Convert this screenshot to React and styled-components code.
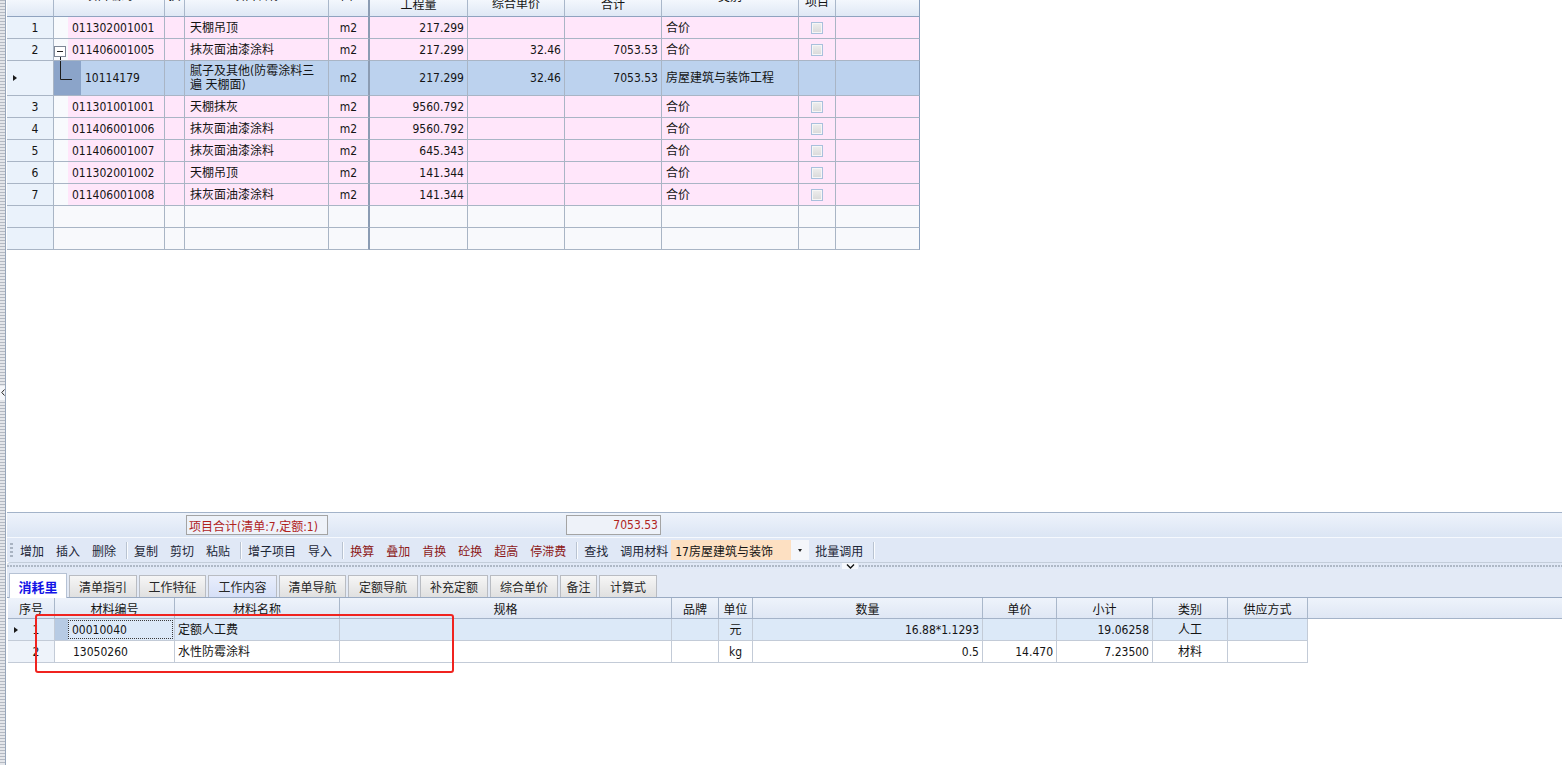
import React from 'react';
import styled, { createGlobalStyle } from 'styled-components';

const GlobalStyle = createGlobalStyle`
  html, body { margin: 0; padding: 0; background: #fff; }
  body {
    font-family: "DejaVu Sans Condensed", "DejaVu Sans", "Noto Sans CJK SC", sans-serif;
    font-size: 12px;
    color: #141414;
  }
`;

const TOP_COLS = '47px 111px 20px 144px 41px 98px 97px 97px 137px 37px 84px';
const BOT_COLS = '47px 120px 165px 332px 47px 34px 230px 74px 96px 75px 80px';

const Page = styled.div`
  position: relative;
  display: flex;
  width: 1562px;
  height: 765px;
  overflow: hidden;
`;

const SideGrip = styled.div`
  width: 6px;
  flex: none;
  box-sizing: border-box;
  border-right: 1px solid #97a6bb;
  background: repeating-linear-gradient(to bottom, #b4b9c2 0 1px, #e4e6ea 1px 3px);
  display: flex;
  align-items: center;
  padding-top: 20px;
`;

const GripArrow = styled.div`
  width: 5px;
  height: 14px;
  background: #f4f6fa;
  display: flex;
  align-items: center;
  justify-content: center;
`;

const Main = styled.div`
  flex: 1;
  display: flex;
  flex-direction: column;
  min-width: 0;
  padding-left: 1px;
`;

/* ---------- top grid ---------- */

const TopPane = styled.div`
  height: 512px;
  flex: none;
  background: #fff;
  overflow: hidden;
`;

const TopGrid = styled.div`
  width: 913px;
`;

const GridRow = styled.div`
  display: grid;
  grid-template-columns: ${p => p.$cols};
  width: max-content;
  height: ${p => p.$h || 22}px;
  background: ${p => p.$bg || 'transparent'};
`;

const HeadCell = styled.div`
  box-sizing: border-box;
  height: 17px;
  overflow: hidden;
  display: flex;
  align-items: flex-end;
  justify-content: center;
  padding-bottom: ${p => p.$lift}px;
  line-height: 14px;
  background: linear-gradient(#f3f7fd, #dfe8f5);
  border-right: ${p => (p.$thick ? '2px solid #8b9cb3' : p.$last ? '1px solid #8aa0bd' : '1px solid #a9b7ca')};
  border-bottom: 1px solid #8fa3bf;
  white-space: nowrap;
`;

const Cell = styled.div`
  box-sizing: border-box;
  display: flex;
  align-items: center;
  justify-content: ${p => (p.$align === 'right' ? 'flex-end' : p.$align === 'center' ? 'center' : 'flex-start')};
  padding: 0 ${p => (p.$pad ?? 4)}px;
  border-right: ${p => (p.$thick ? '2px solid #8b9cb3' : p.$last ? '1px solid #8aa0bd' : '1px solid #a9b5c5')};
  border-bottom: 1px solid #a9b5c5;
  background: ${p => p.$bg || 'transparent'};
  white-space: nowrap;
  overflow: hidden;
  line-height: 14px;
`;

const NumCell = styled(Cell)`
  padding: 0;
  background: ${p => p.$bg || '#eaf2fb'};
`;

const Marker = styled.span`
  width: 4px;
  margin-left: 6px;
  flex: none;
  height: 7px;
  display: flex;
  align-items: center;
  &::before {
    content: '';
    display: ${p => (p.$on ? 'block' : 'none')};
    border-left: 4px solid #1a1a1a;
    border-top: 3.5px solid transparent;
    border-bottom: 3.5px solid transparent;
  }
`;

const Num = styled.span`
  flex: 1;
  text-align: center;
`;

const CodeCell = styled(Cell)`
  padding: 0;
`;

const Indent = styled.div`
  width: ${p => p.$w}px;
  align-self: stretch;
  flex: none;
  background: ${p => p.$bg};
`;

const CodeText = styled.span`
  padding-left: 4px;
`;

const Check = styled.span`
  width: 12px;
  height: 12px;
  box-sizing: border-box;
  border: 1px solid #a9c0dc;
  background: linear-gradient(#eeeeee, #d9d9d9);
  box-shadow: inset 0 0 0 1px #f6f6f6;
`;

/* ---------- summary + toolbar ---------- */

const SumBar = styled.div`
  height: 25px;
  flex: none;
  box-sizing: border-box;
  border-top: 1px solid #a3b3c9;
  background: linear-gradient(#eef3fb, #dbe5f4);
  display: grid;
  grid-template-columns: ${TOP_COLS};
  align-items: center;
`;

const SumBox = styled.div`
  grid-column: ${p => p.$col};
  height: 20px;
  box-sizing: border-box;
  margin: 0 1px;
  border: 1px solid #a4a4a4;
  background: #eef2f9;
  color: #b0231d;
  display: flex;
  align-items: center;
  justify-content: ${p => (p.$right ? 'flex-end' : 'flex-start')};
  padding: 0 2px;
  white-space: nowrap;
`;

const ToolBar = styled.div`
  height: 25px;
  flex: none;
  box-sizing: border-box;
  border-top: 1px solid #f6f9fe;
  background: #e0e8f6;
  display: flex;
  align-items: center;
`;

const Grip = styled.span`
  width: 3px;
  height: 14px;
  margin: 0 1px 0 3px;
  background: repeating-linear-gradient(to bottom, #a9b3c2 0 2px, transparent 2px 4px);
`;

const Tool = styled.span`
  padding: 0 6px;
  color: ${p => (p.$red ? '#8c1818' : '#1c2636')};
  white-space: nowrap;
`;

const Sep = styled.span`
  width: 1px;
  height: 17px;
  margin: 0 1px 0 4px;
  background: #b9c3d1;
  box-shadow: 1px 0 0 #fafcff;
`;

const Combo = styled.div`
  width: 138px;
  height: 20px;
  display: flex;
  align-items: stretch;
  margin-left: -3px;
`;

const ComboText = styled.div`
  flex: 1;
  background: #fde0c2;
  display: flex;
  align-items: center;
  padding-left: 4px;
  white-space: nowrap;
`;

const ComboBtn = styled.div`
  width: 18px;
  background: #f4f6fa;
  display: flex;
  align-items: center;
  justify-content: center;
  &::before {
    content: '';
    border-top: 3px solid #222;
    border-left: 2.5px solid transparent;
    border-right: 2.5px solid transparent;
  }
`;

const PaneSplit = styled.div`
  height: 7px;
  flex: none;
  background: #e0e8f6;
  display: flex;
  align-items: center;
  border-top: 1px solid #c3cdda;
  border-top-left-radius: 4px;
  box-sizing: border-box;
`;

const Dots = styled.div`
  height: 2px;
  flex: ${p => (p.$w ? 'none' : 1)};
  width: ${p => (p.$w ? `${p.$w}px` : 'auto')};
  background: repeating-linear-gradient(to right, #aeb8c6 0 2px, transparent 2px 3px);
`;

const Handle = styled.div`
  width: 16px;
  height: 7px;
  background: #f7f9fd;
  display: flex;
  align-items: center;
  justify-content: center;
  margin: 0 1px;
`;

/* ---------- tabs + bottom grid ---------- */

const TabStrip = styled.div`
  height: 29px;
  flex: none;
  box-sizing: border-box;
  background: #e3eaf6;
  display: flex;
  align-items: flex-end;
  gap: 2px;
  padding-left: 2px;
  border-bottom: 1px solid #9aabc3;
`;

const Tab = styled.div`
  width: ${p => p.$w}px;
  height: ${p => (p.$active ? 25 : 22)}px;
  box-sizing: border-box;
  border: 1px solid ${p => (p.$active ? '#b6c2d4' : '#b9bcc2')};
  border-bottom: none;
  background: ${p => (p.$active ? '#fff' : p.$hl ? 'linear-gradient(#e9eefc, #d6e0f7)' : 'linear-gradient(#f6f6f6, #e0e0e0)')};
  color: ${p => (p.$active ? '#1414e6' : '#262626')};
  font-weight: ${p => (p.$active ? 700 : 400)};
  font-size: ${p => (p.$active ? 13 : 12)}px;
  display: flex;
  align-items: center;
  justify-content: center;
  margin-bottom: ${p => (p.$active ? -1 : 0)}px;
  white-space: nowrap;
`;

const BottomPane = styled.div`
  flex: 1;
  background: #fff;
  padding-left: 1px;
`;

const BotHead = styled.div`
  height: 21px;
  box-sizing: border-box;
  background: linear-gradient(#eef3fb, #dfe7f4);
  border-bottom: 1px solid #a4b3c8;
`;

const BotHeadCell = styled.div`
  box-sizing: border-box;
  height: 20px;
  display: flex;
  align-items: center;
  justify-content: center;
  border-right: 1px solid #a9b7ca;
  white-space: nowrap;
`;

const BotCell = styled(Cell)`
  border-right: 1px solid #c3cbd7;
  border-bottom: 1px solid #c3cbd7;
`;

const BotNum = styled(BotCell)`
  padding: 0;
  background: ${p => p.$bg};
`;

const Focus = styled.div`
  align-self: stretch;
  flex: 1;
  margin: 1px 1px 1px 0;
  border: 1px dotted #3a3a3a;
  display: flex;
  align-items: center;
  padding-left: 3px;
`;

const Annotation = styled.div`
  position: absolute;
  left: 35px;
  top: 614px;
  width: 419px;
  height: 59px;
  box-sizing: border-box;
  border: 2px solid #f0231f;
  border-radius: 3px;
  pointer-events: none;
`;

const PINK = '#ffe6fa';
const SEL = '#bcd2ee';

const topRows = [
  { no: '1', code: '011302001001', name: '天棚吊顶', qty: '217.299', type: '合价', check: true },
  { no: '2', code: '011406001005', name: '抹灰面油漆涂料', qty: '217.299', price: '32.46', total: '7053.53', type: '合价', check: true, tree: true },
  { sel: true, code: '10114179', name: ['腻子及其他(防霉涂料三', '遍 天棚面)'], qty: '217.299', price: '32.46', total: '7053.53', type: '房屋建筑与装饰工程' },
  { no: '3', code: '011301001001', name: '天棚抹灰', qty: '9560.792', type: '合价', check: true },
  { no: '4', code: '011406001006', name: '抹灰面油漆涂料', qty: '9560.792', type: '合价', check: true },
  { no: '5', code: '011406001007', name: '抹灰面油漆涂料', qty: '645.343', type: '合价', check: true },
  { no: '6', code: '011302001002', name: '天棚吊顶', qty: '141.344', type: '合价', check: true },
  { no: '7', code: '011406001008', name: '抹灰面油漆涂料', qty: '141.344', type: '合价', check: true },
];

const topHeads = [
  ['序号', 14], ['项目编码', 13], ['换', 13], ['项目名称', 13], ['单位', 13],
  ['工程量', 4], ['综合单价', 5], ['合计', 4], ['类别', 12], ['项目', 7], ['条件', 14],
];

const tools = [
  ['增加'], ['插入'], ['删除'], '|', ['复制'], ['剪切'], ['粘贴'], '|', ['增子项目'], ['导入'], '|',
  ['换算', 1], ['叠加', 1], ['肯换', 1], ['砼换', 1], ['超高', 1], ['停滞费', 1], '|', ['查找'], ['调用材料'],
];

const tabs = [
  ['消耗里', 58], ['清单指引', 68], ['工作特征', 67], ['工作内容', 69], ['清单导航', 67],
  ['定额导航', 70], ['补充定额', 68], ['综合单价', 68], ['备注', 37], ['计算式', 58],
];

const botHeads = ['序号', '材料编号', '材料名称', '规格', '品牌', '单位', '数量', '单价', '小计', '类别', '供应方式'];

function TreeBox() {
  return (
    <svg width="14" height="22" viewBox="0 0 14 22">
      <rect x="0.5" y="7.5" width="11" height="10" fill="#fff" stroke="#7d8796" />
      <line x1="3" y1="12.5" x2="9" y2="12.5" stroke="#222" />
      <line x1="6.5" y1="18" x2="6.5" y2="22" stroke="#1c1c1c" />
    </svg>
  );
}

function TreeElbow() {
  return (
    <svg width="27" height="35" viewBox="0 0 27 35">
      <path d="M6.5 0 V18.5 H18" fill="none" stroke="#1c1c1c" />
    </svg>
  );
}

function TopRow({ r }) {
  const bg = r.sel ? SEL : PINK;
  return (
    <GridRow $cols={TOP_COLS} $h={r.sel ? 35 : 22} $bg={bg}>
      <NumCell>
        <Marker $on={r.sel} />
        <Num>{r.no}</Num>
      </NumCell>
      <CodeCell>
        {r.sel ? (
          <Indent $w={27} $bg="#8ba4c9"><TreeElbow /></Indent>
        ) : (
          <Indent $w={14} $bg="#f8fafd">{r.tree && <TreeBox />}</Indent>
        )}
        <CodeText>{r.code}</CodeText>
      </CodeCell>
      <Cell />
      <Cell $pad={5}>
        {Array.isArray(r.name) ? (
          <span>{r.name[0]}<br />{r.name[1]}</span>
        ) : r.name}
      </Cell>
      <Cell $align="center" $thick>m2</Cell>
      <Cell $align="right" $pad={3}>{r.qty}</Cell>
      <Cell $align="right" $pad={3}>{r.price}</Cell>
      <Cell $align="right" $pad={3}>{r.total}</Cell>
      <Cell $pad={4}>{r.type}</Cell>
      <Cell $align="center">{r.check && <Check />}</Cell>
      <Cell $last />
    </GridRow>
  );
}

function EmptyRow() {
  return (
    <GridRow $cols={TOP_COLS} $bg="#f8f9fc">
      <NumCell />
      <Cell /><Cell /><Cell /><Cell $thick /><Cell /><Cell /><Cell /><Cell /><Cell /><Cell $last />
    </GridRow>
  );
}

export default function App() {
  return (
    <>
      <GlobalStyle />
      <Page>
        <SideGrip>
          <GripArrow>
            <svg width="4" height="7" viewBox="0 0 4 7">
              <path d="M3.5 0.5 L0.8 3.5 L3.5 6.5" fill="none" stroke="#222" />
            </svg>
          </GripArrow>
        </SideGrip>

        <Main>
          <TopPane>
            <TopGrid>
              <GridRow $cols={TOP_COLS} $h={17}>
                {topHeads.map(([t, lift], i) => (
                  <HeadCell key={t} $lift={lift} $thick={i === 4} $last={i === 10}>{t}</HeadCell>
                ))}
              </GridRow>
              {topRows.map((r, i) => <TopRow key={i} r={r} />)}
              <EmptyRow />
              <EmptyRow />
            </TopGrid>
          </TopPane>

          <SumBar>
            <SumBox $col={4}>项目合计(清单:7,定额:1)</SumBox>
            <SumBox $col={8} $right>7053.53</SumBox>
          </SumBar>

          <ToolBar>
            <Grip />
            {tools.map((t, i) =>
              t === '|' ? <Sep key={i} /> : <Tool key={i} $red={t[1]}>{t[0]}</Tool>
            )}
            <Combo>
              <ComboText>17房屋建筑与装饰</ComboText>
              <ComboBtn />
            </Combo>
            <Tool>批量调用</Tool>
            <Sep />
          </ToolBar>

          <PaneSplit>
            <Dots $w={834} />
            <Handle>
              <svg width="9" height="5" viewBox="0 0 9 5">
                <path d="M1 0.5 L4.5 4 L8 0.5" fill="none" stroke="#111" strokeWidth="1.4" />
              </svg>
            </Handle>
            <Dots />
          </PaneSplit>

          <TabStrip>
            {tabs.map(([t, w], i) => (
              <Tab key={t} $w={w} $active={i === 0} $hl={i === 3}>{t}</Tab>
            ))}
          </TabStrip>

          <BottomPane>
            <BotHead>
              <GridRow $cols={BOT_COLS} $h={20}>
                {botHeads.map(h => <BotHeadCell key={h}>{h}</BotHeadCell>)}
              </GridRow>
            </BotHead>
            <GridRow $cols={BOT_COLS} $h={22} $bg="#dce9f8">
              <BotNum $bg="#e3edf9">
                <Marker $on />
                <Num>1</Num>
              </BotNum>
              <BotCell $pad={0}>
                <Indent $w={13} $bg="#b7cbe4" />
                <Focus>00010040</Focus>
              </BotCell>
              <BotCell $pad={3}>定额人工费</BotCell>
              <BotCell />
              <BotCell />
              <BotCell $align="center">元</BotCell>
              <BotCell $align="right" $pad={3}>16.88*1.1293</BotCell>
              <BotCell />
              <BotCell $align="right" $pad={3}>19.06258</BotCell>
              <BotCell $align="center">人工</BotCell>
              <BotCell />
            </GridRow>
            <GridRow $cols={BOT_COLS} $h={22} $bg="#fff">
              <BotNum $bg="#eef3fa">
                <Marker />
                <Num>2</Num>
              </BotNum>
              <BotCell $pad={18}>13050260</BotCell>
              <BotCell $pad={3}>水性防霉涂料</BotCell>
              <BotCell />
              <BotCell />
              <BotCell $align="center">kg</BotCell>
              <BotCell $align="right" $pad={3}>0.5</BotCell>
              <BotCell $align="right" $pad={3}>14.470</BotCell>
              <BotCell $align="right" $pad={3}>7.23500</BotCell>
              <BotCell $align="center">材料</BotCell>
              <BotCell />
            </GridRow>
          </BottomPane>
        </Main>

        <Annotation />
      </Page>
    </>
  );
}
